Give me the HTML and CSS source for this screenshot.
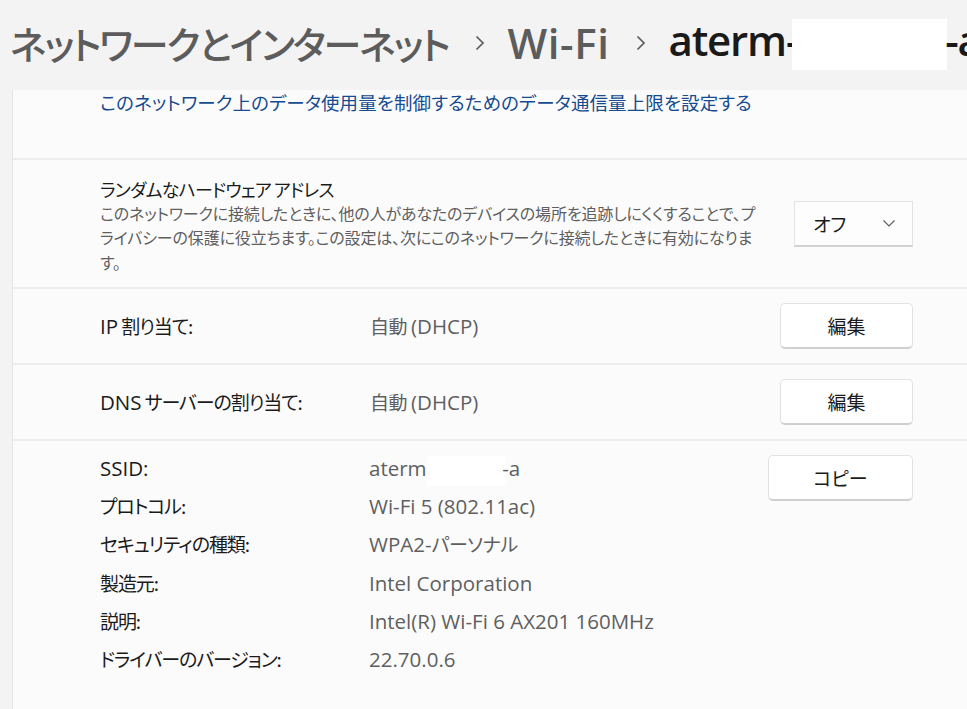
FILE: index.html
```html
<!DOCTYPE html>
<html lang="ja">
<head>
<meta charset="utf-8">
<link rel="stylesheet" href="styles.css">
</head>
<body>
<header class="header">
  <span class="crumb jp">ネットワークとインターネット</span>
  <svg class="chev" width="12" height="16" viewBox="0 0 12 16"><polyline points="2.5,1.5 9,8 2.5,14.5" fill="none" stroke="#5c5c5c" stroke-width="1.7"/></svg>
  <span class="crumb lat">Wi-Fi</span>
  <svg class="chev" width="12" height="16" viewBox="0 0 12 16"><polyline points="2.5,1.5 9,8 2.5,14.5" fill="none" stroke="#5c5c5c" stroke-width="1.7"/></svg>
  <span class="crumb lat current">aterm-<span class="redact big"></span>-a</span>
</header>
<main class="card">
  <section class="row link-row">
    <a class="link" href="#">このネットワーク上のデータ使用量を制御するためのデータ通信量上限を設定する</a>
  </section>
  <section class="row setting">
    <div class="setting-text">
      <div class="title">ランダムなハードウェア アドレス</div>
      <div class="desc">このネットワークに接続したときに、他の人があなたのデバイスの場所を追跡しにくくすることで、プ<br>ライバシーの保護に役立ちます。この設定は、次にこのネットワークに接続したときに有効になりま<br>す。</div>
    </div>
    <div class="dropdown">
      <span>オフ</span>
      <svg width="14" height="10" viewBox="0 0 14 10"><polyline points="1.5,2.5 7,8 12.5,2.5" fill="none" stroke="#5f5f5f" stroke-width="1.2"/></svg>
    </div>
  </section>
  <section class="row kv">
    <div class="label"><span class="en">IP</span> 割り当て:</div>
    <div class="value">自動 <span class="en">(DHCP)</span></div>
    <button class="btn">編集</button>
  </section>
  <section class="row kv">
    <div class="label"><span class="en">DNS</span> サーバーの割り当て:</div>
    <div class="value">自動 <span class="en">(DHCP)</span></div>
    <button class="btn">編集</button>
  </section>
  <section class="row details">
    <div class="props">
      <div class="label"><span class="en">SSID:</span></div><div class="value"><span class="en">aterm-</span><span class="redact small"></span><span class="en">-a</span></div>
      <div class="label">プロトコル:</div><div class="value"><span class="en">Wi-Fi 5 (802.11ac)</span></div>
      <div class="label">セキュリティの種類:</div><div class="value"><span class="en">WPA2-</span>パーソナル</div>
      <div class="label">製造元:</div><div class="value"><span class="en">Intel Corporation</span></div>
      <div class="label">説明:</div><div class="value"><span class="en">Intel(R) Wi-Fi 6 AX201 160MHz</span></div>
      <div class="label">ドライバーのバージョン:</div><div class="value"><span class="en">22.70.0.6</span></div>
    </div>
    <button class="btn copy">コピー</button>
  </section>
</main>
</body>
</html>
```

FILE: styles.css
```css
* { box-sizing: border-box; }
html, body {
  margin: 0;
  height: 100%;
  overflow: hidden;
  background: #f3f3f3;
}
body {
  font-family: "Noto Sans CJK JP", "Noto Sans", sans-serif;
  font-feature-settings: "palt";
  color: #1b1b1b;
}
.header {
  height: 90px;
  display: flex;
  align-items: center;
  padding: 0 0 5px 10px;
  white-space: nowrap;
  overflow: hidden;
}
.crumb {
  font-weight: 500;
  color: #5c5c5c;
  line-height: 50px;
}
.crumb.jp {
  font-size: 38px;
  letter-spacing: -2.1px;
}
.crumb.lat {
  font-family: "Open Sans", "Noto Sans CJK JP", sans-serif;
  font-weight: 600;
  font-size: 42px;
  letter-spacing: 0.6px;
}
.chev { margin: 0 22px 0 25px; flex: none; }
.crumb.current { color: #1a1a1a; letter-spacing: -1.2px; }
.redact {
  display: inline-block;
  background: #ffffff;
  vertical-align: middle;
}
.redact.big { width: 155px; height: 51px; margin: 0 -2px 0 -6px; }
.redact.small { width: 79px; height: 30px; margin: -6px -4px -6px -6px; }

.card {
  margin-left: 12px;
  border-left: 1px solid #e5e5e5;
  background: #fbfbfb;
  height: 619px;
}
.row {
  padding: 0 54px 0 87px;
  border-top: 2px solid #ededed;
}
.row:first-child { border-top: none; }
.link-row { height: 68px; }
.link {
  display: block;
  font-size: 18.5px;
  letter-spacing: 0.1px;
  line-height: 24px;
  color: #174b8f;
  text-decoration: none;
}
.setting {
  display: flex;
  align-items: center;
  justify-content: space-between;
  height: 129px;
}
.setting-text { padding-top: 4px; }
.title {
  font-size: 18px;
  line-height: 24px;
  letter-spacing: -0.8px;
  color: #1b1b1b;
}
.desc {
  font-size: 16px;
  line-height: 24.5px;
  letter-spacing: -0.15px;
  color: #5f5f5f;
  white-space: nowrap;
}
.dropdown {
  width: 119px;
  height: 46px;
  flex: none;
  display: flex;
  align-items: center;
  justify-content: space-between;
  padding: 0 16px 0 18px;
  background: #fdfdfd;
  border: 1px solid #e3e3e3;
  border-bottom: 2px solid #d2d2d2;
  font-size: 19px;
}
.kv {
  display: grid;
  grid-template-columns: 270px 1fr 133px;
  align-items: center;
  height: 76px;
}
.label {
  font-size: 19px;
  color: #1b1b1b;
  letter-spacing: -1.1px;
}
.value {
  font-size: 19px;
  color: #5f5f5f;
  letter-spacing: -0.4px;
}
.en {
  font-family: "Open Sans", "Noto Sans CJK JP", sans-serif;
  font-size: 20.5px;
  letter-spacing: 0;
}
.btn {
  font-family: inherit;
  font-feature-settings: "palt";
  height: 46px;
  background: #ffffff;
  border: 1px solid #e2e2e2;
  border-bottom: 2px solid #cfcfcf;
  border-radius: 5px;
  font-size: 19px;
  color: #1b1b1b;
  padding: 0;
}
.details {
  display: flex;
  justify-content: space-between;
  align-items: flex-start;
  padding-top: 8px;
}
.props {
  display: grid;
  grid-template-columns: 269px auto;
  line-height: 37.2px;
}
.copy { width: 145px; margin-top: 6px; }
```
